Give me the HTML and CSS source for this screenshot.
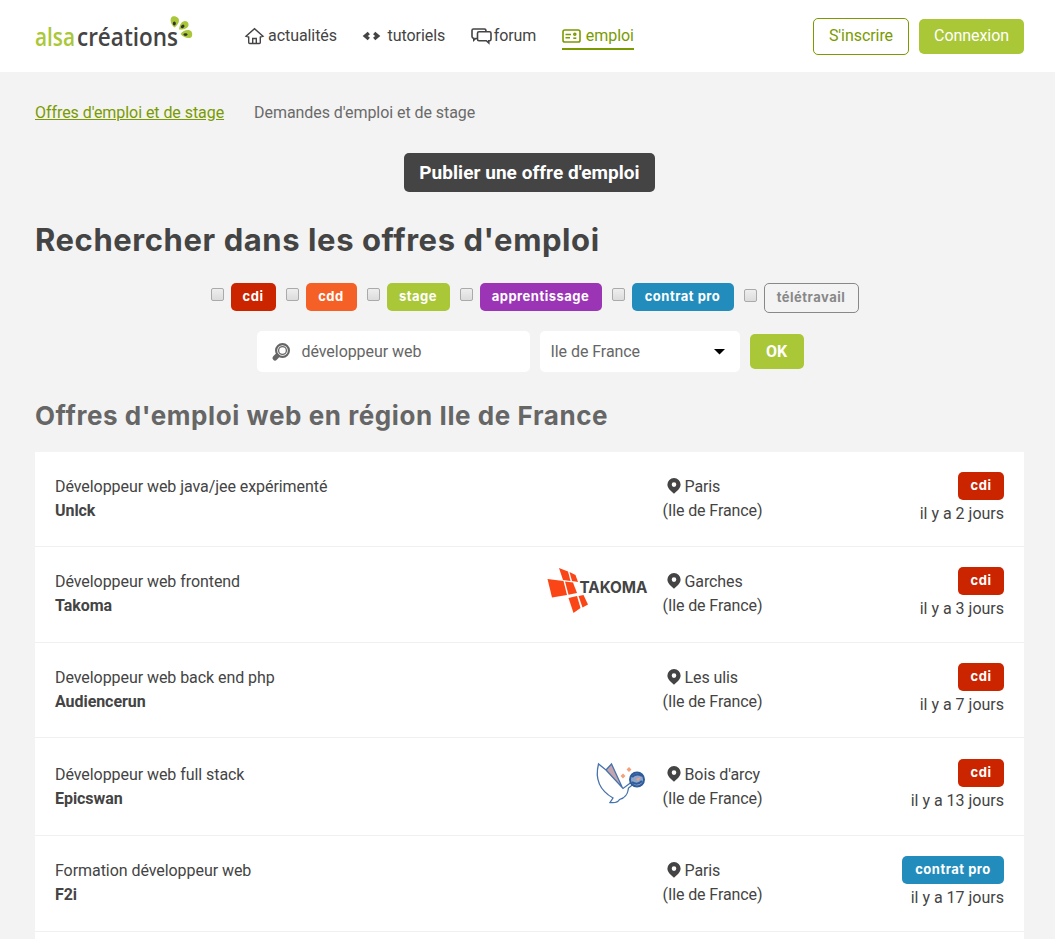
FILE: index.html
```html
<!DOCTYPE html>
<html lang="fr">
<head>
    <meta charset="UTF-8">
    <meta name="viewport" content="width=device-width, initial-scale=1.0">
    <title>Offres d'emploi web - Alsacréations</title>
    <link rel="stylesheet" href="styles.css">
</head>
<body>
    <svg class="sprite" width="0" height="0">
        <symbol id="pin" viewBox="0 0 14 16">
            <path fill-rule="evenodd" d="M7 0a6.600 6.600 0 0 0-6.600 6.600C.4 10.600 4.300 13.200 7 15.800c2.700-2.600 6.600-5.200 6.600-9.200A6.600 6.600 0 0 0 7 0zm0 4.300a2.300 2.300 0 1 1 0 4.600 2.300 2.300 0 0 1 0-4.600z"/>
        </symbol>
    </svg>

    <header class="header">
        <a class="logo" href="#">
            <svg width="160" height="40" viewBox="0 0 160 40">
                <text class="logo-text logo-alsa" x="0" y="29.500" textLength="40" lengthAdjust="spacingAndGlyphs">alsa</text>
                <text class="logo-text" x="42" y="29.500" textLength="101" lengthAdjust="spacingAndGlyphs">créations</text>
                <g class="logo-leaf">
                    <path d="M139.500 11.500c-3.500-2.500-4.500-7-3.500-9.500s5-2 7 0 1 6-3.500 9.500z"/>
                    <path d="M144 13.500c.5-5 3-8.500 6-8.500s4 3 3.300 5-4.300 4-9.300 3.500z"/>
                    <path d="M145.500 18c2-3 6-4.500 9-3.800s3.300 4.800 2 6.800-8 1-11-3z"/>
                </g>
                <g class="logo-seed">
                    <ellipse cx="139.300" cy="7.500" rx="1.500" ry="2"/>
                    <ellipse cx="147.600" cy="10.400" rx="2" ry="1.500" transform="rotate(-35 147.600 10.400)"/>
                    <ellipse cx="150.500" cy="18.600" rx="2" ry="1.400"/>
                </g>
            </svg>
        </a>
        <nav class="main-nav">
            <a class="nav-item" href="#">
                <svg class="icon-home" width="19" height="18" viewBox="0 0 19 18"><path d="M3.700 9.500v6q0 1 1 1h9.600q1 0 1-1v-6M7.700 16v-4.500h3.600V16"/><path d="M3.700 10.200L1 9.300l8.500-7.600L18 9.300l-2.700.9"/></svg>
                actualités
            </a>
            <a class="nav-item" href="#">
                <svg class="icon-code" width="17" height="10" viewBox="0 0 17 10"><path d="M5.800 2L2.300 5l3.500 3M11.200 2l3.500 3-3.500 3"/></svg>
                tutoriels
            </a>
            <a class="nav-item" href="#">
                <svg class="icon-forum" width="21" height="17" viewBox="0 0 21 17"><path d="M6 10.500H4.700l-1.900 1.700v-1.800Q1 10 1 8.500v-6Q1 1 2.500 1h11Q15 1 15 3.500"/><path d="M8 3.700h10.500q1.500 0 1.500 1.500v6q0 1.500-1.500 1.500h-.7v2.200l-2.500-2.200H8q-1.500 0-1.500-1.500v-6Q6.500 3.700 8 3.700z"/></svg>
                forum
            </a>
            <a class="nav-item active" href="#">
                <svg class="icon-card" width="19" height="14" viewBox="0 0 19 14"><rect x="1" y="1" width="17" height="12" rx="1.800"/><path d="M3.500 5.500H9M3.500 8.700H8"/><circle cx="12.800" cy="5.300" r="1"/><path d="M11.300 9.200h3"/></svg>
                emploi
            </a>
        </nav>
        <div class="account">
            <a class="btn btn-outline" href="#">S'inscrire</a>
            <a class="btn" href="#">Connexion</a>
        </div>
    </header>

    <main class="container">
        <div class="sub-nav">
            <a class="active" href="#">Offres d'emploi et de stage</a>
            <a href="#">Demandes d'emploi et de stage</a>
        </div>

        <a class="publish" href="#">Publier une offre d'emploi</a>

        <h1>Rechercher dans les offres d'emploi</h1>

        <form class="search">
            <div class="filters">
                <label><input type="checkbox"><span class="tag cdi">cdi</span></label>
                <label><input type="checkbox"><span class="tag cdd">cdd</span></label>
                <label><input type="checkbox"><span class="tag stage">stage</span></label>
                <label><input type="checkbox"><span class="tag apprentissage">apprentissage</span></label>
                <label><input type="checkbox"><span class="tag contrat">contrat pro</span></label>
                <label class="remote"><input type="checkbox"><span class="tag teletravail">télétravail</span></label>
            </div>
            <div class="fields">
                <div class="field keywords">
                    <svg width="18" height="18" viewBox="0 0 18 18"><circle class="lens" cx="10.500" cy="7.500" r="6.400"/><circle class="glass" cx="10.500" cy="7.500" r="3.900"/><path d="M5 13l-2 2"/></svg>
                    <span>développeur web</span>
                </div>
                <div class="field region">
                    <span>Ile de France</span>
                    <svg width="11" height="6" viewBox="0 0 11 6"><path d="M0 0h11L5.500 5.500z"/></svg>
                </div>
                <button class="btn ok" type="button">OK</button>
            </div>
        </form>

        <h2>Offres d'emploi web en région Ile de France</h2>

        <div class="offers">
            <div class="offer">
                <div class="job">Développeur web java/jee expérimenté<br><b>Unlck</b></div>
                <div class="brand"></div>
                <div class="place"><svg class="pin"><use href="#pin"/></svg>Paris<br>(Ile de France)</div>
                <div class="date"><span class="tag cdi">cdi</span><span>il y a 2 jours</span></div>
            </div>
            <div class="offer mid">
                <div class="job">Développeur web frontend<br><b>Takoma</b></div>
                <div class="brand">
                    <svg width="101" height="48" viewBox="0 0 101 48">
                        <g class="takoma-mark">
                            <path d="M12 1l9 3.500 2.500 9.500-7.500-1z"/>
                            <path d="M22.500 5l6 3 2.500 7-6-1z"/>
                            <path d="M.5 12l16 2 3.500 14-15 2.500z"/>
                            <path d="M18 14.500l8 1L30 26l-8.500 1.700z"/>
                            <path d="M21.500 31l8.500-2 3.500 12-7 5z"/>
                            <path d="M31.500 29l5-1 4.500 9.500-5.500 3z"/>
                        </g>
                        <text class="takoma-text" x="32.500" y="26" textLength="68" lengthAdjust="spacingAndGlyphs">TAKOMA</text>
                    </svg>
                </div>
                <div class="place"><svg class="pin"><use href="#pin"/></svg>Garches<br>(Ile de France)</div>
                <div class="date"><span class="tag cdi">cdi</span><span>il y a 3 jours</span></div>
            </div>
            <div class="offer">
                <div class="job">Developpeur web back end php<br><b>Audiencerun</b></div>
                <div class="brand"></div>
                <div class="place"><svg class="pin"><use href="#pin"/></svg>Les ulis<br>(Ile de France)</div>
                <div class="date"><span class="tag cdi">cdi</span><span>il y a 7 jours</span></div>
            </div>
            <div class="offer tall">
                <div class="job">Développeur web full stack<br><b>Epicswan</b></div>
                <div class="brand">
                    <svg class="swan" width="52" height="44" viewBox="0 0 52 44">
                        <path class="swan-wing" d="M10 8l5.500-6 11 24z"/>
                        <path class="swan-line" d="M10 8L2.500 2C-1 16 3 28 17 36l-3 4.500c4 .5 8 0 9.500-3C32 35 32 29 32.500 26l5-4M10 8l5.500-6 11 24M10 8l17 18.500 8-6"/>
                        <circle class="swan-head" cx="41" cy="17.500" r="7"/>
                        <path class="swan-hair" d="M36 15c3-3 7-3 10-1M36 20c4 3 7 2 10-1"/>
                        <path class="swan-star" d="M40 17l5-2-3 4zM33 5l2.500 2.500L33 10l-2.500-2.500zM27 11.500l2.500 2.500-2.500 2.500-2.500-2.500z"/>
                    </svg>
                </div>
                <div class="place"><svg class="pin"><use href="#pin"/></svg>Bois d'arcy<br>(Ile de France)</div>
                <div class="date"><span class="tag cdi">cdi</span><span>il y a 13 jours</span></div>
            </div>
            <div class="offer mid">
                <div class="job">Formation développeur web<br><b>F2i</b></div>
                <div class="brand"></div>
                <div class="place"><svg class="pin"><use href="#pin"/></svg>Paris<br>(Ile de France)</div>
                <div class="date"><span class="tag contrat">contrat pro</span><span>il y a 17 jours</span></div>
            </div>
        </div>
    </main>
</body>
</html>
```
FILE: styles.css
```css
* { box-sizing: border-box; }
html { overflow: hidden; }
body { margin: 0; height: 939px; overflow: hidden; background-color: #f3f3f3; color: #444; font: 16px/24px Roboto, sans-serif; letter-spacing: -0.06px; }
a { color: inherit; text-decoration: none; }
svg { display: block; flex: none; overflow: visible; }
.sprite { position: absolute; }

.header { display: flex; height: 72px; padding: 0 31px 0 35px; background-color: white; }
.logo { width: 210px; padding-top: 16px; }
.logo-text { font: 600 25px "Open Sans", sans-serif; letter-spacing: 0; fill: #444; }
.logo-text.logo-alsa, .logo-leaf { fill: #aac738; }
.logo-seed { fill: #333; }
.main-nav { display: flex; padding-top: 22px; }
.nav-item { display: flex; align-items: center; height: 28px; margin-right: 25.500px; padding-top: 2px; border-bottom: 2px solid transparent; }
.nav-item.active { color: #7a9a01; border-color: #7a9a01; }
.nav-item svg { fill: none; stroke: currentColor; stroke-width: 1.6; margin-right: 4px; }
.nav-item .icon-home { stroke-width: 1.4; }
.nav-item .icon-code { stroke-width: 3.4; margin-right: 8px; }
.nav-item .icon-forum { margin-right: 2px; }
.nav-item .icon-card { margin-right: 5px; }
.account { display: flex; align-items: flex-start; gap: 10px; margin-left: auto; padding-top: 18px; }
.btn { height: 35px; margin-top: 1px; padding: 0 15px; border: 0; border-radius: 5px; background-color: #aac738; color: white; line-height: 33px; }
.btn-outline { height: 37px; margin-top: 0; border: 1px solid #7a9a01; background-color: white; color: #7a9a01; }

.container { padding: 0 31px 0 35px; }
.sub-nav { display: flex; gap: 30px; padding-top: 29px; color: #6a6a6a; }
.sub-nav .active { color: #7a9a01; text-decoration: underline; }
.publish { display: block; width: 251px; height: 39px; margin: 28px auto 0; border-radius: 5px; background-color: #444; color: white; font-size: 19px; font-weight: bold; line-height: 39px; letter-spacing: 0.04px; text-align: center; }
h1, h2 { margin: 0; font-family: Inter, sans-serif; font-weight: 700; letter-spacing: 0.58px; white-space: nowrap; }
h1 { margin-top: 28px; font-size: 31px; line-height: 40px; }
h2 { margin-top: 28px; color: #666; font-size: 26px; line-height: 32px; }

.filters { display: flex; justify-content: center; gap: 10px; height: 30px; margin-top: 23px; padding-left: 10px; }
.filters label { display: flex; gap: 7px; }
.filters input { appearance: none; width: 13px; height: 13px; margin: 5px 0 0; border: 1px solid #aaa; border-radius: 2px; background: linear-gradient(#eee, #dcdcdc); }
.filters .remote input { margin-top: 6px; }
.tag { width: 46px; height: 28px; border-radius: 5px; color: white; font: 700 13px/26px Inter, sans-serif; letter-spacing: 0.5px; text-align: center; }
.filters .tag { line-height: 27px; }
.cdi { background-color: #cb2500; }
.filters .cdi { width: 45px; }
.cdd { width: 51px; background-color: #f56026; }
.stage { width: 63px; background-color: #aac738; }
.apprentissage { width: 122px; background-color: #9b34b5; }
.contrat { width: 102px; background-color: #228dbd; }
.teletravail { width: 95px; height: 30px; border: 1px solid #888; color: #888; }

.fields { display: flex; justify-content: center; gap: 10px; margin-top: 18px; padding-left: 1px; }
.field { display: flex; align-items: center; height: 41px; border-radius: 5px; background-color: white; color: #666; }
.keywords { width: 273px; padding-left: 15px; }
.keywords svg { margin-right: 12px; fill: none; stroke: #666; }
.keywords .lens { stroke-width: 2.2; }
.keywords .glass { stroke-width: 1.3; }
.keywords path { stroke-width: 5; stroke-linecap: round; }
.region { justify-content: space-between; width: 200px; padding: 0 15px 0 11px; }
.region svg { fill: black; }
.ok { width: 54px; margin-top: 3px; font: 700 16px/33px Roboto, sans-serif; }

.offers { margin-top: 20px; padding-bottom: 20px; background-color: white; }
.offer { display: grid; grid-template-columns: 492px 101px 120px 1fr; align-items: center; align-content: start; height: 95px; padding: 20px 20px 0; border-bottom: 1px solid #f0f0f0; }
.offer.mid { height: 96px; }
.offer.tall { height: 98px; padding-top: 21px; }
.offer.tall .job, .offer.tall .place { padding-top: 1px; }
.brand { display: flex; align-self: start; justify-content: flex-end; }
.place { padding-left: 14.5px; letter-spacing: -0.1px; }
.pin { display: inline-block; width: 14px; height: 16px; margin: 0 4px; vertical-align: -2px; fill: #444; }
.date { display: flex; flex-direction: column; align-items: flex-end; gap: 2px; letter-spacing: 0; }
.takoma-mark { fill: #fa4616; }
.takoma-text { font: 700 16px Inter, sans-serif; letter-spacing: 0; fill: #444; }
.swan { margin-top: 3px; }
.swan-wing { fill: #c5a5ad; }
.swan-line { fill: none; stroke: #4673ad; stroke-width: 1.3; }
.swan-head { fill: #8fa5cc; stroke: #2d5b9b; stroke-width: 2; }
.swan-hair { fill: none; stroke: #2d5b9b; stroke-width: 2; }
.swan-star { fill: #f3a17c; }
```
